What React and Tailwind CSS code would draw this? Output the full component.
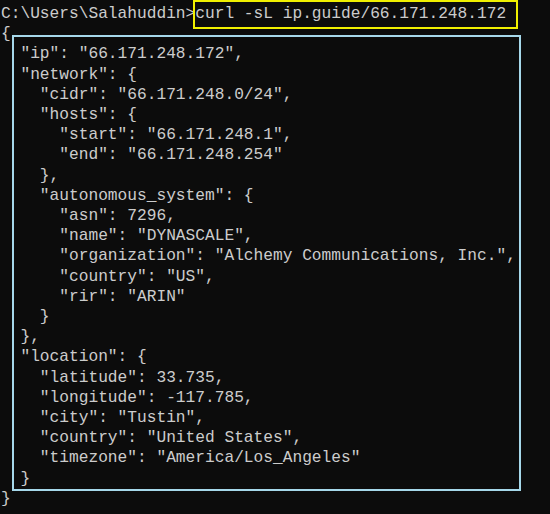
import React from "react";

// Terminal output of `curl -sL ip.guide/<ip>`, with the two highlight boxes
// drawn over it like a marked-up screenshot.
const PROMPT = "C:\\Users\\Salahuddin>";
const COMMAND = "curl -sL ip.guide/66.171.248.172";

const OUTPUT = [
  "{",
  '  "ip": "66.171.248.172",',
  '  "network": {',
  '    "cidr": "66.171.248.0/24",',
  '    "hosts": {',
  '      "start": "66.171.248.1",',
  '      "end": "66.171.248.254"',
  "    },",
  '    "autonomous_system": {',
  '      "asn": 7296,',
  '      "name": "DYNASCALE",',
  '      "organization": "Alchemy Communications, Inc.",',
  '      "country": "US",',
  '      "rir": "ARIN"',
  "    }",
  "  },",
  '  "location": {',
  '    "latitude": 33.735,',
  '    "longitude": -117.785,',
  '    "city": "Tustin",',
  '    "country": "United States",',
  '    "timezone": "America/Los_Angeles"',
  "  }",
  "}",
];

export default function App() {
  return (
    <div className="relative w-[550px] h-[514px] overflow-hidden bg-[#0c0c0c] text-[#cccccc]">
      <div className="pt-[4px] pl-[1px] font-['Liberation_Mono',monospace] text-[16.2px] leading-[20.2px] whitespace-pre">
        <div>
          {PROMPT}
          {COMMAND}
        </div>
        {OUTPUT.map((line, i) => (
          <div key={i}>{line}</div>
        ))}
      </div>

      {/* highlight boxes */}
      <div className="pointer-events-none absolute left-[193px] top-0 w-[325px] h-[29px] border-2 border-[#f0f000]" />
      <div className="pointer-events-none absolute left-[12px] top-[35px] w-[509px] h-[456px] border-2 border-[#a6d8ea]" />
    </div>
  );
}
